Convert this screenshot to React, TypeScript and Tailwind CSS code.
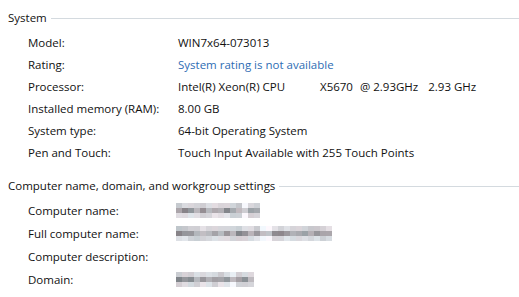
import React from "react";

const font = { fontFamily: '"Segoe UI", "Open Sans", "Noto Sans", sans-serif' };

function Header({ text, className }: { text: string; className?: string }) {
  return (
    <div className={"flex items-center h-[22px] pl-2 " + (className ?? "")}>
      <span className="text-[11.5px] text-[#111] whitespace-nowrap">{text}</span>
      <div className="flex-1 h-px bg-[#d4dadf] ml-1 mt-[1px]" />
    </div>
  );
}

function Row({ label, children, h = "h-[22px]" }: { label: string; children?: React.ReactNode; h?: string }) {
  return (
    <div className={"flex items-center " + h}>
      <div className="w-[150px] pl-[28px] shrink-0 box-content text-[11.5px] text-[#111] whitespace-nowrap">{label}</div>
      <div className="flex items-center text-[11.5px] text-[#111] whitespace-nowrap">{children}</div>
    </div>
  );
}

function Mosaic({ blocks, seed, gaps = [] }: { blocks: number; seed: number; gaps?: number[] }) {
  const rand = (i: number) => {
    const x = Math.sin(i * 12.9898 + seed * 78.233) * 43758.5453;
    return x - Math.floor(x);
  };
  const rows = [
    { base: 212, spread: 30 },
    { base: 160, spread: 60 },
    { base: 218, spread: 24 },
  ];
  return (
    <div className="flex flex-col">
      {rows.map((r, ri) => (
        <div key={ri} className="flex">
          {Array.from({ length: blocks }).map((_, bi) => {
            const isGap = gaps.includes(bi);
            let g = Math.round(r.base + (rand(ri * 100 + bi) - 0.5) * r.spread);
            if (isGap) g = Math.min(250, g + 40);
            g = Math.max(110, Math.min(248, g));
            const tint = Math.round((rand(ri * 37 + bi * 3) - 0.5) * 14);
            const rr = Math.max(0, Math.min(255, g + tint));
            const bb = Math.min(255, g + 5);
            return (
              <div
                key={bi}
                className="w-[6px] h-[5px]"
                style={{ backgroundColor: `rgb(${rr},${g},${bb})` }}
              />
            );
          })}
        </div>
      ))}
    </div>
  );
}

export default function App() {
  return (
    <div className="w-[519px] h-[297px] bg-white overflow-hidden pt-[7px]" style={font}>
      <Header text="System" />
      <div className="mt-[3px]">
        <Row label="Model:">WIN7x64-073013</Row>
        <Row label="Rating:">
          <span className="text-[#2e6db4]">System rating is not available</span>
        </Row>
        <Row label="Processor:">
          <span className="w-[142px]">Intel(R) Xeon(R) CPU</span>
          <span>X5670</span>
          <span className="ml-[7px]">@ 2.93GHz</span>
          <span className="ml-[10px]">2.93 GHz</span>
        </Row>
        <Row label="Installed memory (RAM):">8.00 GB</Row>
        <Row label="System type:">64-bit Operating System</Row>
        <Row label="Pen and Touch:">Touch Input Available with 255 Touch Points</Row>
      </div>
      <Header text="Computer name, domain, and workgroup settings" className="mt-[11px]" />
      <div className="mt-[2px]">
        <Row label="Computer name:" h="h-[23px]">
          <div className="-ml-[2px]"><Mosaic blocks={14} seed={1} gaps={[11]} /></div>
        </Row>
        <Row label="Full computer name:" h="h-[23px]">
          <div className="-ml-[2px]"><Mosaic blocks={26} seed={2} gaps={[14, 15]} /></div>
        </Row>
        <Row label="Computer description:" h="h-[23px]" />
        <Row label="Domain:" h="h-[23px]">
          <div className="-ml-[2px]"><Mosaic blocks={13} seed={3} gaps={[9]} /></div>
        </Row>
      </div>
    </div>
  );
}
